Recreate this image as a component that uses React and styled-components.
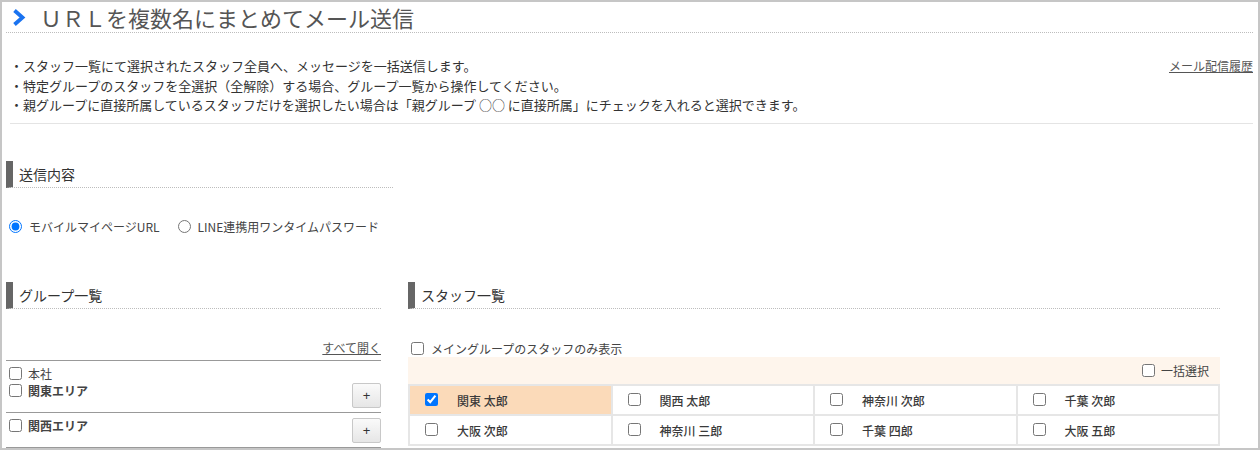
import styled, { createGlobalStyle } from 'styled-components';

const GlobalStyle = createGlobalStyle`
  body {
    margin: 0;
    font-family: "Noto Sans CJK JP", "Noto Sans", sans-serif;
    color: #333;
    background: #fff;
  }
  input[type='checkbox'], input[type='radio'] {
    margin: 0;
    width: 13px;
    height: 13px;
    flex: none;
  }
`;

const notes = [
  '・スタッフ一覧にて選択されたスタッフ全員へ、メッセージを一括送信します。',
  '・特定グループのスタッフを全選択（全解除）する場合、グループ一覧から操作してください。',
  '・親グループに直接所属しているスタッフだけを選択したい場合は「親グループ ○○ に直接所属」にチェックを入れると選択できます。',
];

const staff = [
  ['関東 太郎', '関西 太郎', '神奈川 次郎', '千葉 次郎'],
  ['大阪 次郎', '神奈川 三郎', '千葉 四郎', '大阪 五郎'],
];

const App = () => (
  <>
    <GlobalStyle />
    <Frame>
      <Title>
        <svg width="14" height="17" viewBox="0 0 14 17">
          <polyline points="2.5,1.5 10.5,8.5 2.5,15.5" fill="none" stroke="#1a73f0" strokeWidth="3.8" />
        </svg>
        <span>ＵＲＬを複数名にまとめてメール送信</span>
      </Title>

      <Info>
        <ul>
          {notes.map(n => (
            <li key={n}>{n}</li>
          ))}
        </ul>
        <Link href="#">メール配信履歴</Link>
      </Info>

      <Section width="387px">送信内容</Section>
      <Radios>
        <label>
          <input type="radio" name="kind" defaultChecked />
          モバイルマイページURL
        </label>
        <label>
          <input type="radio" name="kind" />
          LINE連携用ワンタイムパスワード
        </label>
      </Radios>

      <Columns>
        <LeftCol>
          <Section>グループ一覧</Section>
          <OpenAll>
            <Link href="#">すべて開く</Link>
          </OpenAll>
          <GroupList>
            <GroupBlock>
              <GroupRow>
                <Check>
                  <input type="checkbox" />
                  本社
                </Check>
              </GroupRow>
              <GroupRow>
                <Check bold>
                  <input type="checkbox" />
                  関東エリア
                </Check>
                <PlusButton type="button">+</PlusButton>
              </GroupRow>
            </GroupBlock>
            <GroupBlock>
              <GroupRow>
                <Check bold>
                  <input type="checkbox" />
                  関西エリア
                </Check>
                <PlusButton type="button">+</PlusButton>
              </GroupRow>
            </GroupBlock>
          </GroupList>
        </LeftCol>

        <RightCol>
          <Section>スタッフ一覧</Section>
          <MainOnly>
            <input type="checkbox" />
            メイングループのスタッフのみ表示
          </MainOnly>
          <Band>
            <Check>
              <input type="checkbox" />
              一括選択
            </Check>
          </Band>
          <StaffTable>
            <tbody>
              {staff.map((row, r) => (
                <tr key={r}>
                  {row.map((name, c) => {
                    const on = r === 0 && c === 0;
                    return (
                      <Cell key={name} selected={on}>
                        <input type="checkbox" defaultChecked={on} />
                        <span>{name}</span>
                      </Cell>
                    );
                  })}
                </tr>
              ))}
            </tbody>
          </StaffTable>
        </RightCol>
      </Columns>
    </Frame>
  </>
);

const Frame = styled.div`
  width: 1260px;
  height: 450px;
  box-sizing: border-box;
  border: 2px solid #c6c6c6;
  overflow: hidden;
  padding: 0 5px 0 4px;
`;

const Title = styled.h1`
  margin: 0;
  height: 30px;
  display: flex;
  align-items: center;
  gap: 14px;
  padding-left: 6px;
  border-bottom: 1px dotted #bdbdbd;
  font-size: 22px;
  font-weight: normal;
  color: #555;
  line-height: 1;
`;

const Info = styled.div`
  display: flex;
  justify-content: space-between;
  align-items: flex-start;
  margin: 23px 0 0 4px;
  padding-bottom: 8px;
  border-bottom: 1px solid #e4e4e4;
  ul {
    margin: 0;
    padding: 0;
    list-style: none;
    font-size: 13px;
    line-height: 19.5px;
    color: #333;
  }
  a {
    margin-top: 1px;
    line-height: 18px;
  }
`;

const Link = styled.a`
  font-size: 12px;
  color: #555;
  text-decoration: underline;
`;

const Section = styled.h2`
  margin: 0;
  width: ${p => p.width || 'auto'};
  box-sizing: border-box;
  height: 27px;
  display: flex;
  align-items: center;
  padding-left: 6px;
  border-left: 7px solid #666;
  border-bottom: 1px dotted #bdbdbd;
  font-size: 14px;
  font-weight: normal;
  color: #333;
  ${Info} + & {
    margin-top: 37px;
  }
`;

const Radios = styled.div`
  display: flex;
  gap: 18px;
  margin-top: 31px;
  padding-left: 3px;
  font-size: 12px;
  color: #444;
  label {
    display: flex;
    align-items: center;
    gap: 7px;
    line-height: 16px;
  }
`;

const Columns = styled.div`
  display: flex;
  align-items: flex-start;
  gap: 27px;
  margin-top: 47px;
`;

const LeftCol = styled.div`
  width: 375px;
  flex: none;
`;

const RightCol = styled.div`
  width: 812px;
  flex: none;
`;

const OpenAll = styled.div`
  display: flex;
  justify-content: flex-end;
  margin-top: 30px;
  line-height: 18px;
  padding-bottom: 3px;
`;

const GroupList = styled.div`
  border-top: 1px solid #999;
`;

const GroupBlock = styled.div`
  padding: 4px 0 4px 3px;
  border-bottom: 1px solid #999;
`;

const GroupRow = styled.div`
  display: flex;
  justify-content: space-between;
  align-items: flex-start;
  min-height: 17px;
`;

const Check = styled.label`
  display: flex;
  align-items: center;
  gap: 6px;
  font-size: 12px;
  line-height: 17px;
  font-weight: ${p => (p.bold ? 'bold' : 'normal')};
  color: #444;
`;

const PlusButton = styled.button`
  width: 29px;
  height: 25px;
  margin-top: 1px;
  padding: 0;
  border: 1px solid #c8c8c8;
  border-radius: 2px;
  background: linear-gradient(#fafafa, #e6e6e6);
  font-family: "Liberation Sans", sans-serif;
  font-size: 13px;
  color: #333;
`;

const MainOnly = styled.label`
  display: flex;
  align-items: center;
  gap: 7px;
  margin-top: 32px;
  padding-left: 3px;
  font-size: 12px;
  line-height: 16px;
  color: #444;
`;

const Band = styled.div`
  display: flex;
  justify-content: flex-end;
  align-items: center;
  height: 28px;
  padding-right: 11px;
  background: #fef5ec;
`;

const StaffTable = styled.table`
  width: 100%;
  border-collapse: collapse;
  table-layout: fixed;
  border: 2px solid #e6e6e6;
  margin-top: -1px;
`;

const Cell = styled.td`
  height: 28px;
  padding: 0 0 0 15px;
  border: 2px solid #e6e6e6;
  background: ${p => (p.selected ? '#fbdab9' : '#fff')};
  font-size: 12px;
  font-weight: 500;
  color: #3a3a3a;
  input {
    vertical-align: middle;
    margin-top: -2px;
  }
  span {
    margin-left: 19px;
    vertical-align: middle;
  }
`;

export default App;
